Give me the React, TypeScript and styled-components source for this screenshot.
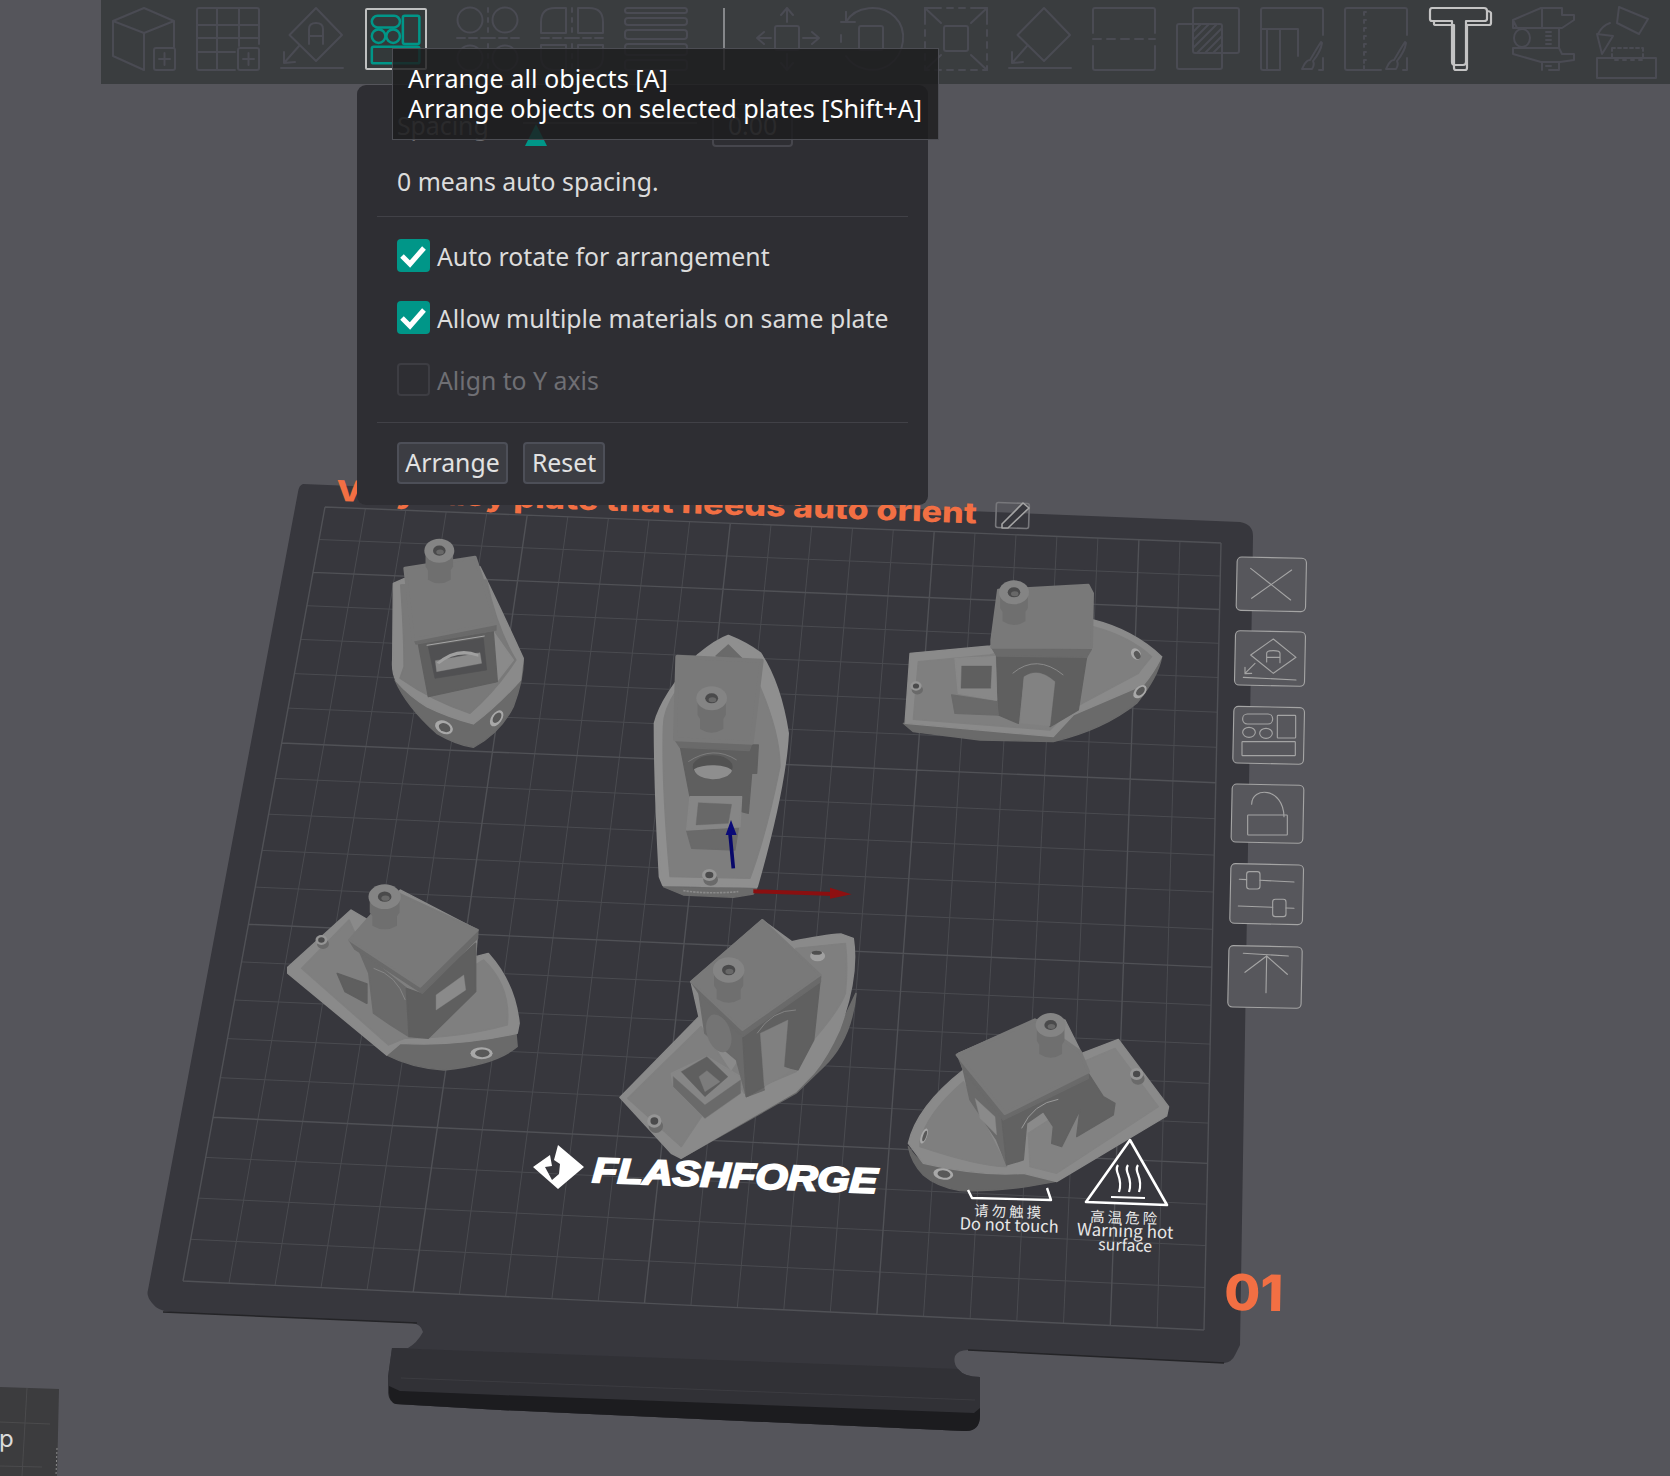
import React from 'react';
import styled, { createGlobalStyle } from 'styled-components';

const Global = createGlobalStyle`
  html, body { margin: 0; padding: 0; background: #55555b; }
  body { font-family: "Noto Sans", "Noto Sans CJK SC", sans-serif; }
`;

const Stage = styled.div`
  position: relative;
  width: 1670px;
  height: 1476px;
  overflow: hidden;
  background: #55555b;
`;

const Scene = styled.svg`
  position: absolute;
  inset: 0;
  width: 1670px;
  height: 1476px;
`;

const Toolbar = styled.div`
  position: relative;
  margin-left: 101px;
  height: 84px;
  padding: 8px 0 0 12px;
  box-sizing: border-box;
  background: #3a3d3f;
  display: flex;
  gap: 30px;
`;

const ToolGroup = styled.div`
  display: flex;
  gap: 22px;
`;

const ToolDivider = styled.div`
  width: 2px;
  height: 62px;
  background: #85878a;
  margin: 0 2px 0 6px;
`;

const ToolButton = styled.div<{ $active?: boolean }>`
  width: 62px;
  height: 62px;
  flex: none;
  box-sizing: border-box;
  border-radius: 2px;
  box-shadow: ${(p) => (p.$active ? 'inset 0 0 0 2px #bfc0c0' : 'none')};
  background: ${(p) => (p.$active ? '#33393a' : 'transparent')};
  svg { display: block; width: 62px; height: 62px; overflow: visible; }
`;

const Panel = styled.div`
  position: absolute;
  left: 357px;
  top: 85px;
  width: 571px;
  box-sizing: border-box;
  padding: 18px 20px 21px;
  background: #2e2e33;
  border-radius: 9px;
  color: #dcdcdc;
  font-size: 24.8px;
`;

const SpacingRow = styled.div`
  display: flex;
  align-items: center;
  height: 44px;
  padding-left: 20px;
  color: #6c6c70;
`;

const SpacingLabel = styled.span`
  flex: 0 0 126px;
  line-height: 44px;
`;

const Slider = styled.div`
  position: relative;
  flex: 0 0 174px;
  height: 44px;
`;

const SliderTrack = styled.div`
  position: absolute;
  left: 0;
  right: 0;
  top: 19px;
  height: 2px;
  background: #46464c;
`;

const SliderThumb = styled.div`
  position: absolute;
  left: 2px;
  top: 21px;
  width: 0;
  height: 0;
  border-left: 11px solid transparent;
  border-right: 11px solid transparent;
  border-bottom: 22px solid #009688;
`;

const SpacingInput = styled.div`
  margin-left: 15px;
  flex: 0 0 81px;
  height: 44px;
  box-sizing: border-box;
  border: 2px solid #46464d;
  border-radius: 4px;
  text-align: center;
  line-height: 40px;
`;

const Hint = styled.div`
  margin: 19px 0 0 20px;
  line-height: 30px;
`;

const Rule = styled.div<{ $gap?: number }>`
  height: 1px;
  background: #414147;
  margin-top: ${(p) => p.$gap ?? 0}px;
`;

const CheckList = styled.div`
  margin: 22px 0 26px 20px;
  display: flex;
  flex-direction: column;
  gap: 29px;
`;

const CheckRow = styled.div<{ $disabled?: boolean }>`
  display: flex;
  align-items: center;
  gap: 7px;
  height: 33px;
  color: ${(p) => (p.$disabled ? '#6f6f74' : '#dcdcdc')};
`;

const CheckBox = styled.div<{ $on?: boolean }>`
  width: 33px;
  height: 33px;
  box-sizing: border-box;
  border-radius: 4px;
  border: ${(p) => (p.$on ? 'none' : '2px solid #3d3d43')};
  background: ${(p) => (p.$on ? '#009688' : 'transparent')};
  svg { display: block; width: 33px; height: 33px; }
`;

const ButtonRow = styled.div`
  display: flex;
  gap: 15px;
  margin: 19px 0 0 20px;
`;

const PanelButton = styled.div<{ $w: number }>`
  width: ${(p) => p.$w}px;
  height: 42px;
  box-sizing: border-box;
  background: #3c3d43;
  border: 2px solid #4d4f58;
  border-radius: 4px;
  text-align: center;
  line-height: 37px;
  color: #e2e2e2;
`;

const Tooltip = styled.div`
  position: absolute;
  left: 392px;
  top: 48px;
  width: 547px;
  height: 92px;
  box-sizing: border-box;
  padding: 14px 0 0 15px;
  background: rgba(28, 28, 29, 0.82);
  border: 1px solid #4c4d53;
  color: #fff;
  font-size: 25.2px;
  line-height: 30px;
  white-space: nowrap;
`;

/* ---------- toolbar icons ---------- */
const dim = { fill: 'none', stroke: '#4a4b53', strokeWidth: 2, strokeLinejoin: 'round', strokeLinecap: 'round' } as const;

const Icon: React.FC<{ children: React.ReactNode }> = ({ children }) => (
  <svg viewBox="0 0 62 62">{children}</svg>
);

const DiamondArrow = () => (
  <>
    <path d="M35 0L61 27L35 53L8.5 27Z" />
    <path d="M18 38L3 55M3 44L3 55L14 54M0 60H62" />
  </>
);

const Brush = () => (
  <path d="M60 34C56 40 52 47 49 52C44 52 43 58 41 61H51C53 58 53 55 52 53C56 48 60 42 61 35Z" />
);

const toolIcons = [
  <g {...dim}>
    <path d="M31 0L61 13V40M31 0L0 13V48L31 62V25L0 13M31 25L61 13" />
    <rect x="41" y="40" width="21" height="22" rx="2" />
    <path d="M51.5 45V57M46 51H57" />
  </g>,
  <g {...dim}>
    <path d="M38 62H2Q0 62 0 60V2Q0 0 2 0H60Q62 0 62 2V36" />
    <path d="M20 0V62M42 0V38M0 17H62M0 30H62M0 44H38" />
    <rect x="41" y="40" width="21" height="22" rx="2" />
    <path d="M51.5 45V57M46 51H57" />
  </g>,
  <g {...dim}>
    <DiamondArrow />
    <path d="M28 36V21Q28 15 35 15Q42 15 42 21V36M28 28H42" />
  </g>,
  <g fill="none" stroke="#009688" strokeWidth="2.6" transform="translate(1 1) scale(.97)">
    <rect x="6" y="7" width="29" height="12" rx="6" />
    <rect x="38" y="7" width="17" height="29" rx="2" />
    <circle cx="13" cy="28" r="7" />
    <circle cx="28" cy="28" r="7" />
    <rect x="6" y="39" width="49" height="17" rx="2" />
  </g>,
  <g {...dim}>
    <circle cx="13" cy="12" r="12.5" />
    <circle cx="48" cy="12" r="12.5" />
    <circle cx="13" cy="50" r="12.5" />
    <circle cx="48" cy="50" r="12.5" />
    <path d="M31 0V4M31 10V14M31 20V24M31 36V40M31 46V50M31 56V60M0 30H8M12 30H20M24 30H38M42 30H50M54 30H62" />
  </g>,
  <g {...dim}>
    <path d="M25 0H14Q0 0 0 14V25H25ZM37 0H48Q62 0 62 14V25H37ZM25 37H0V48Q0 62 14 62H25ZM37 37H62V48Q62 62 48 62H37Z" />
    <path d="M31 0V4M31 10V14M31 20V24M31 36V40M31 46V50M31 56V60M0 30H8M12 30H20M24 30H38M42 30H50M54 30H62" />
  </g>,
  <g {...dim}>
    <rect x="0" y="0" width="62" height="5" rx="2.5" />
    <rect x="0" y="10" width="62" height="7" rx="3" />
    <rect x="0" y="22" width="62" height="9" rx="3" />
    <rect x="0" y="36" width="62" height="11" rx="3" />
    <rect x="0" y="52" width="62" height="10" rx="3" />
  </g>,
];

const moveIcons = [
  <g {...dim}>
    <rect x="18" y="18" width="24" height="24" rx="2" />
    <path d="M30 14V0M24 7L30 0L36 7M30 46V62M24 55L30 62L36 55M14 30H0M7 24L0 30L7 36M46 30H62M55 24L62 30L55 36" />
  </g>,
  <g {...dim}>
    <rect x="18" y="18" width="24" height="24" rx="2" />
    <path d="M5 14C14 -2 40 -5 54 9C67 22 64 46 48 57C34 66 14 62 5 48M0 27V34M5 14H0M5 14L5 4" />
    <path d="M5 14H14M5 14V4" />
  </g>,
  <g {...dim}>
    <rect x="19" y="18" width="24" height="25" rx="2" />
    <path d="M0 0H4M10 0H16M22 0H28M34 0H40M46 0H52M58 0H62V4M62 10V16M62 22V28M62 34V40M62 46V52M62 58V62H58M52 62H46M40 62H34M28 62H22M16 62H10M4 62H0V58M0 52V46M0 40V34M0 28V22M0 16V10M0 4V0" />
    <path d="M0 0L16 15M0 0V10M0 0H10M62 0L46 15M62 0V10M62 0H52M0 62L16 47M62 62L46 47" />
  </g>,
  <g {...dim}><DiamondArrow /></g>,
  <g {...dim}>
    <path d="M0 25V2Q0 0 2 0H60Q62 0 62 2V25M0 38V60Q0 62 2 62H60Q62 62 62 60V38" />
    <path d="M0 31H8M14 31H22M28 31H36M42 31H50M56 31H62" />
  </g>,
  <g {...dim}>
    <rect x="16" y="0" width="46" height="45" rx="2" />
    <rect x="0" y="16" width="45" height="45" rx="2" />
    <path d="M16 24L24 16M16 32L32 16M16 40L40 16M20 45L45 20M28 45L45 28M36 45L45 36" />
  </g>,
  <g {...dim}>
    <path d="M62 27V2Q62 0 60 0H2Q0 0 0 2V60Q0 62 2 62H19V21H37V48M0 21H19M6 21V62M62 50V62H58" />
    <Brush />
  </g>,
  <g {...dim}>
    <path d="M62 27V2Q62 0 60 0H2Q0 0 0 2V60Q0 62 2 62H36M62 50V62H58" />
    <path d="M19 4V7M19 12V15M19 20V23M19 28V31M19 36V39M19 44V47M19 52V55M19 58V61M19 4H21M19 12H21M19 20H21M19 28H21M19 36H21M19 44H21M19 52H21" />
    <Brush />
  </g>,
  <g fill="none" stroke="#c4c4c4" strokeWidth="2.2" strokeLinejoin="round">
    <path d="M5 13V16Q5 17 7 17H25V60Q25 62 27 62H36Q38 62 38 60V17H60Q62 17 62 15V5Q62 4 59 3" />
    <path d="M3 0H55Q58 0 58 3V11Q58 13 55 13H37V54Q37 57 34 57H26Q23 57 23 54V13H3Q1 13 1 11V3Q1 0 3 0Z" />
  </g>,
  <g {...dim}>
    <path d="M0 12L28 0H49V7H61V12L49 20H0ZM4 20L0 12" />
    <ellipse cx="9" cy="30" rx="8" ry="9" />
    <path d="M29 0V20M46 20V34M46 34V40M0 40H46L49 46H61V52L47 54H28L0 46ZM29 54V62M46 54V62H36" />
    <path d="M33 24H38M33 28H38M33 32H38M33 36H38M33 58H38" />
  </g>,
  <g {...dim}>
    <path d="M22 -1L51 11L42 26L20 15Z" />
    <path d="M13 15C7 17 3 22 1 26M0 26L16 28L5 46Z" />
    <path d="M15 40H46M46 40V52M15 40V52M18 52H22M26 52H30M34 52H38M42 52H46" strokeDasharray="3 3" />
    <rect x="0" y="50" width="59" height="20" />
  </g>,
];

/* ---------- 3D plate ---------- */
const quad = { x0: 325, y0: 507, x1: 1221, y1: 543, x2: 1204, y2: 1330, x3: 183, y3: 1281 };

function project(u: number, v: number): [number, number] {
  const { x0, y0, x1, y1, x2, y2, x3, y3 } = quad;
  const sx = x0 - x1 + x2 - x3;
  const sy = y0 - y1 + y2 - y3;
  const dx1 = x1 - x2;
  const dx2 = x3 - x2;
  const dy1 = y1 - y2;
  const dy2 = y3 - y2;
  const den = dx1 * dy2 - dx2 * dy1;
  const g = (sx * dy2 - dx2 * sy) / den;
  const h = (dx1 * sy - sx * dy1) / den;
  const a = x1 - x0 + g * x1;
  const b = x3 - x0 + h * x3;
  const d = y1 - y0 + g * y1;
  const e = y3 - y0 + h * y3;
  const w = g * u + h * v + 1;
  return [(a * u + b * v + x0) / w, (d * u + e * v + y0) / w];
}

function gridPaths() {
  const COLS = 22;
  const ROWS = 21;
  let thin = '';
  let thick = '';
  const line = (p: [number, number], q: [number, number]) =>
    `M${p[0].toFixed(1)} ${p[1].toFixed(1)}L${q[0].toFixed(1)} ${q[1].toFixed(1)}`;
  for (let c = 0; c <= COLS; c++) {
    const l = line(project(c / COLS, 0), project(c / COLS, 1));
    if (c % 5 === 0 || c === COLS) thick += l; else thin += l;
  }
  for (let r = 0; r <= ROWS; r++) {
    const l = line(project(0, r / ROWS), project(1, r / ROWS));
    if (r % 5 === 2 || r === 0 || r === ROWS) thick += l; else thin += l;
  }
  return { thin, thick };
}

const S: React.FC<{ f: string; d: string; r?: number }> = ({ f, d, r = 4 }) => (
  <path d={d} fill={f} stroke={f} strokeWidth={r} strokeLinejoin="round" />
);

const L = '#8a8a8a';
const M = '#7f7f7f';
const R = '#797979';
const C = '#6a6a6a';
const D = '#5f5f5f';
const H = '#4a4a4b';
const W = '#a8a8a8';

const Funnel: React.FC<{ cx: number; cy: number; rx: number; ry: number; len: number; hole?: number }> = ({ cx, cy, rx, ry, len, hole = 0.42 }) => (
  <>
    <path
      d={`M${cx - rx * 0.92} ${cy}V${cy + len * 0.5}L${cx - rx * 0.76} ${cy + len * 0.62}V${cy + len - 8}Q${cx} ${cy + len + 14} ${cx + rx * 0.76} ${cy + len - 8}V${cy + len * 0.62}L${cx + rx * 0.92} ${cy + len * 0.5}V${cy}Z`}
      fill="#6f6f6f"
    />
    <ellipse cx={cx} cy={cy} rx={rx} ry={ry} fill="#848484" />
    <ellipse cx={cx} cy={cy} rx={rx * hole} ry={ry * hole} fill={H} />
    <ellipse cx={cx + rx * 0.05} cy={cy + ry * 0.12} rx={rx * hole * 0.6} ry={ry * hole * 0.5} fill="#686868" />
  </>
);

const Screw: React.FC<{ cx: number; cy: number; rx: number; ry: number }> = ({ cx, cy, rx, ry }) => (
  <>
    <ellipse cx={cx + 4} cy={cy + ry * 0.8} rx={rx} ry={ry} fill="#6a6a6a" />
    <ellipse cx={cx} cy={cy} rx={rx} ry={ry} fill="#959595" />
    <ellipse cx={cx} cy={cy} rx={rx * 0.55} ry={ry * 0.55} fill={H} />
  </>
);

const Port: React.FC<{ cx: number; cy: number; rx: number; ry: number; rot?: number }> = ({ cx, cy, rx, ry, rot = 0 }) => (
  <g transform={`rotate(${rot} ${cx} ${cy})`}>
    <ellipse cx={cx} cy={cy} rx={rx} ry={ry} fill={W} />
    <ellipse cx={cx + 2} cy={cy} rx={rx * 0.65} ry={ry * 0.65} fill="#585858" />
  </g>
);

const Boat1 = () => (
  <g transform="translate(280 500) scale(.3333)">
    <S f={C} d="M345 540Q380 620 470 700Q530 735 580 742Q660 700 700 620Q730 540 730 480Z" />
    <S f={L} d="M340 250L372 236L600 200Q650 300 730 475Q725 510 722 540Q650 620 580 672Q500 650 440 620Q390 590 350 545Q335 520 338 480Z" />
    <S f={R} d="M362 255Q372 400 372 500L360 535Q460 605 570 640Q650 570 708 480Q650 385 620 240Z" />
    <S f="#8a8a8a" d="M640 395L700 480L650 545Z" />
    <S f={D} d="M415 432L640 395L652 545L445 590Z" />
    <S f="#505052" d="M445 440L610 415L620 510L465 535Z" r={2} />
    <S f="#8b8b8b" d="M466 482L600 458L605 490L470 515Z" r={1} />
    <path d="M470 488Q530 435 595 462L595 470Q530 450 478 492Z" fill="#a0a0a0" />
    <path d="M440 436L614 408" stroke="#a6a6a6" strokeWidth="3" />
    <S f="#6a6a6a" d="M398 408L648 372L648 390L408 432Z" />
    <S f={R} d="M375 205L585 172L650 370L400 420Z" r={10} />
    <Funnel cx={478} cy={152} rx={45} ry={36} len={95} />
    <Port cx={492} cy={682} rx={28} ry={19} rot={25} />
    <Port cx={650} cy={655} rx={27} ry={16} rot={-55} />
  </g>
);

const Boat2 = () => (
  <g transform="translate(620 620) scale(.3333)">
    <S f="#6b6b6b" d="M130 800L410 805L400 822L340 832L190 825Z" />
    <S f="#8f8f8f" d="M325 48Q380 70 420 100Q480 190 503 340Q495 500 410 800L130 795L120 770Q105 500 105 310Q125 230 235 105Q290 60 325 48Z" r={8} />
    <S f="#7e7e7e" d="M150 770L390 775Q440 640 480 440Q480 340 420 200L170 210Q130 270 130 320Q125 500 150 770Z" />
    <S f="#6a6a6a" d="M288 108L325 75L365 115Z" />
    <S f={D} d="M180 375L415 375L410 460L395 460L385 580L365 575L360 530L210 530Z" />
    <ellipse cx="278" cy="440" rx="60" ry="34" fill="#525252" />
    <path d="M222 448A58 34 0 0 0 336 452A60 20 0 0 0 222 448Z" fill="#8e8e8e" />
    <path d="M205 425Q280 375 350 420" fill="none" stroke="#8c8c8c" strokeWidth="2" />
    <S f={C} d="M165 360L395 372L388 392L180 382Z" />
    <S f={R} d="M172 110L425 122L395 368L165 358Z" r={12} />
    <Funnel cx={275} cy={235} rx={46} ry={36} len={100} />
    <S f={C} d="M200 632L355 625L345 690L215 685Z" />
    <S f="#868686" d="M210 530L365 530L360 620L200 630Z" />
    <S f="#686868" d="M235 548L335 553L325 610L228 615Z" r={1} />
    <Screw cx={268} cy={765} rx={22} ry={18} />
    <path d="M190 812C240 820 300 820 355 815" stroke="#8a8a8a" strokeWidth="5" strokeDasharray="7 3" fill="none" />
    <path d="M330 640L340 745" stroke="#08086a" strokeWidth="11" />
    <path d="M333 600L317 645L350 645Z" fill="#0a0a78" />
    <path d="M400 808L640 816L640 828L400 820Z" fill="#8a0f10" />
    <path d="M630 803L695 823L630 836Z" fill="#8e1011" />
  </g>
);

const Boat3 = () => (
  <g transform="translate(880 560) scale(.3333)">
    <S f={C} d="M70 490L520 530L580 465L790 370L845 290Q835 350 770 430Q670 510 520 545L300 540L100 515Z" />
    <S f={L} d="M90 280L330 258L640 180Q760 210 845 290Q820 340 790 375L580 465L520 530L75 490Z" />
    <S f={M} d="M115 305L330 285L640 200Q750 230 815 290Q790 320 775 340L570 450L510 510L100 478Z" />
    <S f={D} d="M350 285L620 290L595 450L510 500L525 370L430 350L415 490L355 465Z" />
    <path d="M398 340Q470 280 550 345" fill="none" stroke="#8a8a8a" strokeWidth="3" />
    <S f="#828282" d="M432 350Q475 320 525 365L510 498L420 490Z" r={1} />
    <S f={C} d="M335 262L634 268L620 292L350 288Z" />
    <S f={R} d="M355 90L625 75L638 100L635 262L335 262L335 240Z" r={8} />
    <Funnel cx={402} cy={97} rx={45} ry={36} len={95} />
    <S f={C} d="M215 405L350 425L355 465L225 460Z" />
    <S f="#888888" d="M225 295L345 290L350 420L235 400Z" />
    <S f={D} d="M245 318L335 318L332 385L243 385Z" r={1} />
    <Screw cx={108} cy={378} rx={17} ry={14} />
    <Port cx={780} cy={395} rx={24} ry={15} rot={-45} />
    <ellipse cx="768" cy="282" rx="14" ry="18" fill={W} transform="rotate(-30 768 282)" />
    <ellipse cx="772" cy="285" rx="9" ry="13" fill="#585858" transform="rotate(-30 772 285)" />
  </g>
);

const Boat4 = () => (
  <g transform="translate(270 860) scale(.3954 .3333)">
    <S f={C} d="M295 585L330 545Q480 545 620 495L625 560Q570 615 440 630Q360 625 295 585Z" />
    <S f={L} d="M205 150L245 178L330 90L525 210L520 290L552 280Q620 370 630 490L625 520Q480 560 330 550L295 585L45 340L45 322Z" />
    <S f={M} d="M200 180L80 325L300 555L340 535Q480 535 600 495Q610 380 540 300L400 400L230 260Z" />
    <S f={D} d="M170 340L245 372L245 430L190 395Z" />
    <S f={C} d="M225 270L345 385L352 530L305 495L262 460L250 340Z" />
    <path d="M262 325Q320 345 342 420" fill="none" stroke="#909090" strokeWidth="2" />
    <S f="#5f5f5f" d="M380 400L520 250L520 395L400 535L352 530L345 385Z" />
    <S f="#8a8a8a" d="M420 405L490 345L495 390L420 450Z" r={1} />
    <S f={C} d="M200 240L380 380L525 210L525 235L385 400L215 268Z" />
    <S f={R} d="M200 240L310 92L525 210L380 380Z" r={6} />
    <Funnel cx={290} cy={110} rx={41} ry={37} len={95} />
    <Screw cx={130} cy={240} rx={15} ry={15} />
    <Port cx={535} cy={580} rx={28} ry={18} />
  </g>
);

const Boat5 = () => (
  <g transform="translate(270 860) scale(.3954 .3333)">
    <S f={C} d="M1040 895L1365 640L1450 480L1482 400Q1470 540 1400 620L1330 700Z" />
    <S f={L} d="M885 712L1085 470L1065 365L1245 180L1320 245Q1400 225 1445 222L1475 235Q1490 350 1440 510Q1410 590 1375 640L1330 695L1040 895L1015 880Z" />
    <S f={M} d="M905 715L1090 500L1200 700L1330 635L1370 545Q1440 450 1455 400Q1462 320 1455 250L1330 265L1300 400L1040 860Z" />
    <S f="#868686" d="M1015 640L1105 590L1190 650L1190 700L1100 775L1020 680Z" />
    <S f={D} d="M1040 635L1105 590L1158 650L1100 710Z" r={1} />
    <S f="#7c7c7c" d="M1085 650L1105 632L1138 665L1100 695Z" r={1} />
    <S f={C} d="M1020 650L1100 735L1190 660L1190 700L1100 775L1020 680Z" r={1} />
    <S f={C} d="M1085 400L1195 510L1250 690L1205 710L1180 600L1100 520Z" />
    <ellipse cx="1135" cy="520" rx="30" ry="58" fill="#747474" transform="rotate(-14 1135 520)" />
    <S f="#606060" d="M1195 510L1392 350L1375 540L1335 630L1300 620L1310 480L1240 520L1250 680L1205 710Z" />
    <S f="#808080" d="M1240 520L1310 480L1300 620L1320 630L1250 680Z" r={1} />
    <path d="M1232 520Q1270 450 1330 450" fill="none" stroke="#909090" strokeWidth="2" />
    <S f={C} d="M1065 365L1195 510L1392 345L1392 365L1195 530L1085 400Z" />
    <S f={R} d="M1065 365L1245 180L1392 345L1195 510Z" r={6} />
    <Funnel cx={1160} cy={330} rx={40} ry={38} len={95} />
    <Screw cx={972} cy={783} rx={18} ry={20} />
    <ellipse cx="1385" cy="288" rx="19" ry="16" fill="#a0a0a0" />
    <ellipse cx="1383" cy="278" rx="13" ry="6" fill="#4f4f4f" />
  </g>
);

const Boat6 = () => (
  <g transform="translate(880 1000) scale(.3333)">
    <S f="#666666" d="M85 440Q110 480 130 485Q300 525 450 515L525 545L440 560Q330 575 240 572Q170 560 130 525Q95 490 85 440Z" />
    <S f={L} d="M85 430Q110 320 250 210L235 160L465 60L555 60L605 160L715 118L866 320L860 348L530 545L430 520Q300 530 130 490Z" />
    <S f={M} d="M120 425Q140 340 250 245L380 500Q300 500 120 440Z" />
    <S f="#828282" d="M610 185L705 145L835 320L530 520L450 500L445 400L600 300Z" />
    <S f={C} d="M250 210L370 340L380 495L350 420L270 300Z" />
    <S f="#8a8a8a" d="M285 295L345 350L350 405L300 355Z" r={1} />
    <S f="#626262" d="M365 350L625 220L670 290L705 310L700 345L590 410L600 330L545 440L515 430L520 380L490 335L440 370L430 480L380 495Z" />
    <path d="M425 385Q460 310 535 298" fill="none" stroke="#9a9a9a" strokeWidth="3" />
    <S f={C} d="M232 165L375 340L625 215L625 235L370 360L250 210Z" />
    <S f={R} d="M232 165L465 60L600 155L625 215L375 340Z" r={10} />
    <Funnel cx={512} cy={75} rx={45} ry={36} len={95} />
    <Screw cx={770} cy={222} rx={20} ry={18} />
    <Port cx={190} cy={522} rx={30} ry={17} rot={8} />
    <ellipse cx="132" cy="408" rx="9" ry="24" fill={W} transform="rotate(20 132 408)" />
    <ellipse cx="134" cy="408" rx="5" ry="17" fill="#585858" transform="rotate(20 134 408)" />
  </g>
);

const side = { fill: 'none', stroke: '#a4a4a4', strokeWidth: 3.4, strokeLinejoin: 'round', strokeLinecap: 'round' } as const;

const SideButtons = () => (
  <g transform="translate(1200 540) scale(.3333)" {...side}>
    <g fill="#57575c">
      <rect x="110" y="53" width="208" height="160" rx="14" transform="rotate(1.2 214 133)" />
      <rect x="105" y="274" width="210" height="163" rx="14" transform="rotate(1.2 210 355)" />
      <rect x="100" y="501" width="212" height="170" rx="14" transform="rotate(1.2 206 586)" />
      <rect x="95" y="734" width="215" height="174" rx="14" transform="rotate(1.2 202 820)" />
      <rect x="91" y="973" width="218" height="179" rx="14" transform="rotate(1.2 200 1062)" />
      <rect x="85" y="1219" width="220" height="184" rx="14" transform="rotate(1.2 195 1311)" />
    </g>
    <path d="M152 85L272 180M275 90L155 175" />
    <path d="M220 297L288 352L220 400L152 345ZM165 370L135 400M135 382V401L155 400M130 412L288 420" />
    <path d="M200 366V340Q200 332 220 332Q240 332 240 340V368M200 352H240" />
    <rect x="128" y="522" width="90" height="30" rx="14" />
    <rect x="232" y="526" width="55" height="68" rx="2" />
    <ellipse cx="147" cy="577" rx="19" ry="15" />
    <ellipse cx="198" cy="580" rx="19" ry="15" />
    <rect x="126" y="605" width="160" height="42" rx="2" />
    <path d="M155 793C155 740 250 740 252 830" />
    <rect x="143" y="825" width="119" height="60" rx="2" />
    <path d="M118 1018L140 1019M180 1021L282 1026M115 1098L218 1102M258 1104L282 1105" />
    <rect x="140" y="995" width="40" height="52" rx="8" />
    <rect x="218" y="1078" width="40" height="52" rx="8" />
    <path d="M130 1240L265 1248M200 1250L198 1358M135 1297L200 1248L262 1303" />
  </g>
);

const Plate = () => {
  const { thin, thick } = React.useMemo(gridPaths, []);
  const outline =
    'M303 484L1240 522Q1253 524 1253 536L1240 1345L1235 1355Q1232 1362 1224 1363L968 1350Q958 1350 955 1356Q953 1363 958 1369Q964 1377 980 1377L980 1415Q980 1432 964 1431L500 1410L396 1404Q389 1402 388 1392V1377L392 1348L408 1348Q417 1343 423 1332Q421 1324 412 1323L170 1312Q158 1311 152 1303Q146 1296 148 1290L298 492Q299 485 303 484Z';
  return (
    <g>
      <path d={outline} fill="#37373d" />
      <path d="M392 1348L958 1369Q964 1377 980 1377V1415Q980 1432 964 1431L500 1410L396 1404Q389 1402 388 1392V1377Z" fill="#313136" />
      <path d="M389 1386L400 1391L500 1395L974 1413L980 1408V1415Q980 1432 964 1431L500 1410L396 1404Q389 1402 389 1392Z" fill="#1c1c1f" />
      <path d="M401 1378L975 1400" stroke="#3c3c41" strokeWidth="1" />
      <path d="M163 1312L417 1323" stroke="#242427" strokeWidth="1.4" fill="none" />
      <path d="M968 1350L1224 1363" stroke="#242427" strokeWidth="1.4" fill="none" />
      <path d={thin} stroke="#4a4b50" strokeWidth="1" fill="none" />
      <path d={thick} stroke="#505156" strokeWidth="1.4" fill="none" />

      <text
        x="336"
        y="501"
        transform="rotate(2 336 501)"
        fill="#f26f43"
        fontFamily="Inter, sans-serif"
        fontWeight="800"
        fontSize="29"
        textLength="641"
        lengthAdjust="spacingAndGlyphs"
      >
        Very easy plate that needs auto orient
      </text>
      <g fill="none" stroke="#a4a4a4" strokeWidth="1.6" strokeLinejoin="round">
        <rect x="996" y="503" width="33" height="25" rx="2" transform="rotate(2 1012 515)" stroke="#77777b" />
        <path d="M1002 524L1023 503L1029 508L1008 528L1002 528Z" fill="#37373d" />
      </g>

      <Boat1 />
      <Boat3 />
      <Boat4 />
      <Boat5 />
      <Boat6 />
      <Boat2 />

      <g fill="#fff">
        <path d="M558 1145L584 1167L558 1189L533 1167L550 1155L552 1166L545 1167L552 1180L559 1174L560 1164L554 1160Z" />
        <text
          x="592"
          y="1182"
          transform="rotate(2.2 592 1182)"
          fontFamily="'Liberation Sans', sans-serif"
          fontStyle="italic"
          fontWeight="700"
          fontSize="35"
          stroke="#fff"
          strokeWidth="2"
          textLength="285"
          lengthAdjust="spacingAndGlyphs"
        >
          FLASHFORGE
        </text>
      </g>
      <path d="M968 1190L972 1198L1051 1200L1047 1188" fill="none" stroke="#fff" strokeWidth="2.4" strokeLinejoin="round" />
      <path d="M1130 1140L1167 1205L1086 1202Z" fill="#37373d" stroke="#fff" strokeWidth="2.6" strokeLinejoin="round" />
      <path d="M1118 1165C1113 1172 1124 1177 1119 1192M1128 1165C1123 1172 1134 1177 1129 1192M1138 1165C1133 1172 1144 1177 1139 1192M1111 1197L1145 1198" fill="none" stroke="#fff" strokeWidth="2.2" />
      <g fill="#e8e8e8" fontFamily="'Noto Sans CJK SC', 'Noto Sans', sans-serif" textAnchor="middle">
        <text x="1009" y="1217" fontSize="14.5" letterSpacing="3" transform="rotate(2 1009 1217)">请勿触摸</text>
        <text x="1009" y="1231" fontSize="16.5" transform="rotate(2 1009 1231)">Do not touch</text>
        <text x="1125" y="1223" fontSize="14.5" letterSpacing="3" transform="rotate(2 1125 1223)">高温危险</text>
        <text x="1125" y="1237" fontSize="17" transform="rotate(2 1125 1237)">Warning hot</text>
        <text x="1125" y="1251" fontSize="16" transform="rotate(2 1125 1251)">surface</text>
      </g>

      <text
        x="1224"
        y="1310"
        fill="#f26f43"
        fontFamily="Inter, sans-serif"
        fontWeight="800"
        fontSize="50"
        textLength="59"
        lengthAdjust="spacingAndGlyphs"
        transform="rotate(1 1224 1310)"
      >
        01
      </text>

      <SideButtons />

      <path d="M0 1387L59 1389L57 1476H0Z" fill="#3c3c3e" />
      <path d="M0 1422L50 1424M27 1388L22 1476M0 1466L42 1467" stroke="#4b4b4d" strokeWidth="1" fill="none" />
      <path d="M57 1448L56 1476" stroke="#8a8a8a" strokeWidth="1" strokeDasharray="2 2" fill="none" />
      <text x="-1" y="1447" fill="#dadada" fontFamily="Inter, sans-serif" fontSize="24">p</text>
    </g>
  );
};

const Tick = () => (
  <svg viewBox="0 0 33 33"><path d="M5 17L13 25L27 9" fill="none" stroke="#fff" strokeWidth="5" /></svg>
);

export default function App() {
  return (
    <Stage>
      <Global />
      <Scene viewBox="0 0 1670 1476">
        <Plate />
      </Scene>

      <Toolbar>
        <ToolGroup>
          {toolIcons.slice(0, 4).map((ic, i) => (
            <ToolButton key={i} $active={i === 3}>
              <Icon>{ic}</Icon>
            </ToolButton>
          ))}
        </ToolGroup>
        <ToolGroup>
          {toolIcons.slice(4).map((ic, i) => (
            <ToolButton key={i}>
              <Icon>{ic}</Icon>
            </ToolButton>
          ))}
        </ToolGroup>
        <ToolDivider />
        <ToolGroup>
          {moveIcons.map((ic, i) => (
            <ToolButton key={i}>
              <Icon>{ic}</Icon>
            </ToolButton>
          ))}
        </ToolGroup>
      </Toolbar>

      <Panel>
        <SpacingRow>
          <SpacingLabel>Spacing</SpacingLabel>
          <Slider>
            <SliderTrack />
            <SliderThumb />
          </Slider>
          <SpacingInput>0.00</SpacingInput>
        </SpacingRow>
        <Hint>0 means auto spacing.</Hint>
        <Rule $gap={20} />
        <CheckList>
          <CheckRow>
            <CheckBox $on><Tick /></CheckBox>
            Auto rotate for arrangement
          </CheckRow>
          <CheckRow>
            <CheckBox $on><Tick /></CheckBox>
            Allow multiple materials on same plate
          </CheckRow>
          <CheckRow $disabled>
            <CheckBox />
            Align to Y axis
          </CheckRow>
        </CheckList>
        <Rule />
        <ButtonRow>
          <PanelButton $w={111}>Arrange</PanelButton>
          <PanelButton $w={82}>Reset</PanelButton>
        </ButtonRow>
      </Panel>

      <Tooltip>
        Arrange all objects [A]
        <br />
        Arrange objects on selected plates [Shift+A]
      </Tooltip>
    </Stage>
  );
}
